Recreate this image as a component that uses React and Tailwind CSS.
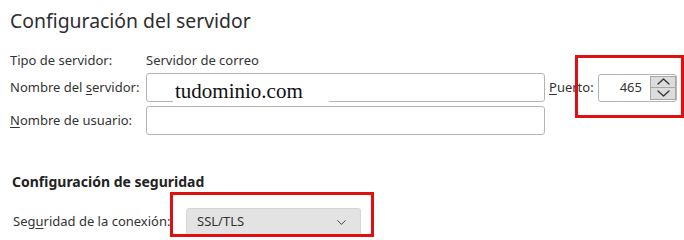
import React from "react";
import { ChevronDown } from "lucide-react";

function SpinArrow({ up }) {
  return (
    <svg width="13" height="7" viewBox="0 0 13 7" fill="none" className="text-[#333]">
      <path
        d={up ? "M1 6 L6.5 1 L12 6" : "M1 1 L6.5 6 L12 1"}
        stroke="currentColor"
        strokeWidth="1.3"
        strokeLinecap="round"
        strokeLinejoin="round"
      />
    </svg>
  );
}

export default function App() {
  return (
    <div
      className="relative w-[684px] h-[240px] overflow-hidden bg-white text-[#333333]"
      style={{ fontFamily: '"Noto Sans", "Open Sans", sans-serif' }}
    >
      {/* Header */}
      <h1 className="pl-[10px] pt-[7px] text-[19.4px] leading-[28px] font-normal text-[#2e2e2e]">
        Configuración del servidor
      </h1>

      {/* Server fields */}
      <div className="mt-[17px] flex flex-col">
        <div className="flex items-center h-[18px] text-[13px]">
          <span className="w-[146px] pl-[10px]">Tipo de servidor:</span>
          <span>Servidor de correo</span>
        </div>

        <div className="mt-[3px] flex items-center h-[29px] text-[13px]">
          <span className="w-[146px] pl-[10px]">
            Nombre del <span className="underline underline-offset-2">s</span>ervidor:
          </span>
          <div className="relative w-[399px] h-[29px] rounded-[3px] border border-[#b4b4b4] bg-white">
            <div className="absolute left-[26px] top-[4px] w-[156px] h-[26px] bg-white flex items-center">
              <span
                className="pl-[2px] text-[21px] leading-none text-[#111]"
                style={{ fontFamily: '"Liberation Serif", "Times New Roman", serif' }}
              >
                tudominio.com
              </span>
            </div>
          </div>
          <span className="ml-[4px] w-[49px]">
            <span className="underline underline-offset-2">P</span>uerto:
          </span>
          <div className="flex items-center w-[79px] h-[28px] rounded-[3px] border border-[#b4b4b4] bg-white">
            <span className="flex-1 text-right pr-[8px] text-[13px]">465</span>
            <div className="flex flex-col w-[26px] h-[24px] border border-[#a8a8a8] bg-[#dcdcdc]">
              <div className="flex-1 flex items-center justify-center border-b border-[#a8a8a8]">
                <SpinArrow up />
              </div>
              <div className="flex-1 flex items-center justify-center">
                <SpinArrow />
              </div>
            </div>
          </div>
        </div>

        <div className="mt-[4px] flex items-center h-[29px] text-[13px]">
          <span className="w-[146px] pl-[10px]">
            <span className="underline underline-offset-2">N</span>ombre de usuario:
          </span>
          <div className="w-[399px] h-[29px] rounded-[3px] border border-[#b4b4b4] bg-white" />
        </div>
      </div>

      {/* Security */}
      <h2 className="mt-[38px] pl-[12px] text-[14px] leading-[18px] font-bold text-[#222]">
        Configuración de seguridad
      </h2>
      <div className="mt-[17px] flex items-center h-[28px] text-[13px]">
        <span className="w-[186px] pl-[13px]">
          Seg<span className="underline underline-offset-2">u</span>ridad de la conexión:
        </span>
        <div className="flex items-center justify-between w-[175px] h-[28px] rounded-[3px] bg-[#e3e3e3] border border-[#d6d6d6] pl-[10px] pr-[11px]">
          <span>SSL/TLS</span>
          <ChevronDown size={15} strokeWidth={1.6} className="text-[#444]" />
        </div>
      </div>

      {/* Annotation boxes */}
      <div className="absolute left-[575px] top-[55px] w-[109px] h-[63px] border-[3px] border-[#e01010]" />
      <div className="absolute left-[170px] top-[192px] w-[204px] h-[45px] border-[3px] border-[#e01010]" />
    </div>
  );
}
